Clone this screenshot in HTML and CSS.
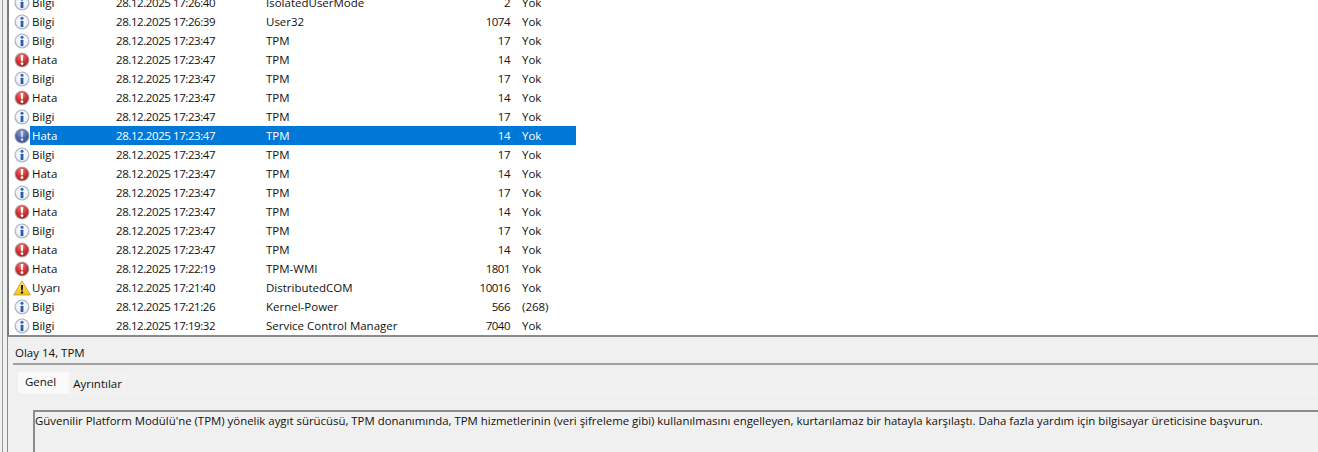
FILE: index.html
```html
<!DOCTYPE html>
<html lang="tr">
<head>
<meta charset="utf-8">
<title>Olay Görüntüleyicisi</title>
<link rel="stylesheet" href="styles.css">
</head>
<body>
<svg class="defs" width="0" height="0" aria-hidden="true">
  <defs>
    <radialGradient id="gi" cx="50%" cy="45%" r="60%"><stop offset="0" stop-color="#ffffff"/><stop offset=".7" stop-color="#eef2f8"/><stop offset="1" stop-color="#c9d0dc"/></radialGradient>
    <radialGradient id="ge" cx="45%" cy="25%" r="80%"><stop offset="0" stop-color="#ea7a7a"/><stop offset=".55" stop-color="#cc3434"/><stop offset="1" stop-color="#a51f1f"/></radialGradient>
    <radialGradient id="gs" cx="45%" cy="25%" r="80%"><stop offset="0" stop-color="#8e9cc9"/><stop offset=".55" stop-color="#5067a6"/><stop offset="1" stop-color="#37508f"/></radialGradient>
    <linearGradient id="gw" x1="0" y1="0" x2="0" y2="1"><stop offset="0" stop-color="#ffe97a"/><stop offset="1" stop-color="#f3c01c"/></linearGradient>
    <symbol id="i-info" viewBox="0 0 16 16">
      <circle cx="8" cy="8" r="7.5" fill="#aeb4bf"/>
      <circle cx="8" cy="8" r="6.4" fill="url(#gi)"/>
      <circle cx="8" cy="4.3" r="1.5" fill="#2f62b8"/>
      <rect x="6.6" y="6.7" width="2.8" height="6.4" rx=".6" fill="#2c5cae"/>
    </symbol>
    <symbol id="i-err" viewBox="0 0 16 16">
      <circle cx="8" cy="8" r="7.5" fill="#b9aeb0"/>
      <circle cx="8" cy="8" r="6.5" fill="url(#ge)"/>
      <path d="M6.7 2.9h2.6l-.5 6.4H7.2z" fill="#fff"/>
      <circle cx="8" cy="11.7" r="1.4" fill="#fff"/>
    </symbol>
    <symbol id="i-err-sel" viewBox="0 0 16 16">
      <circle cx="8" cy="8" r="7.5" fill="#8f9ab9"/>
      <circle cx="8" cy="8" r="6.5" fill="url(#gs)"/>
      <path d="M6.7 2.9h2.6l-.5 6.4H7.2z" fill="#c9d2e8"/>
      <circle cx="8" cy="11.7" r="1.4" fill="#c9d2e8"/>
    </symbol>
    <symbol id="i-warn" viewBox="0 0 18 16">
      <path d="M9 .8 17.4 15H.6z" fill="url(#gw)" stroke="#c9a227" stroke-width=".9" stroke-linejoin="round"/>
      <path d="M7.9 5h2.2l-.3 5.4H8.2z" fill="#1c1c1c"/>
      <circle cx="9" cy="12.5" r="1.2" fill="#1c1c1c"/>
    </symbol>
  </defs>
</svg>
<div class="window">
  <section class="list-pane">
    <div class="rows">
      <div class="row"><svg class="ico"><use href="#i-info"/></svg><div class="cells"><span class="c-level">Bilgi</span><span class="c-date">28.12.2025 17:26:40</span><span class="c-src">IsolatedUserMode</span><span class="c-id">2</span><span class="c-task">Yok</span></div></div>
      <div class="row"><svg class="ico"><use href="#i-info"/></svg><div class="cells"><span class="c-level">Bilgi</span><span class="c-date">28.12.2025 17:26:39</span><span class="c-src">User32</span><span class="c-id">1074</span><span class="c-task">Yok</span></div></div>
      <div class="row"><svg class="ico"><use href="#i-info"/></svg><div class="cells"><span class="c-level">Bilgi</span><span class="c-date">28.12.2025 17:23:47</span><span class="c-src">TPM</span><span class="c-id">17</span><span class="c-task">Yok</span></div></div>
      <div class="row"><svg class="ico"><use href="#i-err"/></svg><div class="cells"><span class="c-level">Hata</span><span class="c-date">28.12.2025 17:23:47</span><span class="c-src">TPM</span><span class="c-id">14</span><span class="c-task">Yok</span></div></div>
      <div class="row"><svg class="ico"><use href="#i-info"/></svg><div class="cells"><span class="c-level">Bilgi</span><span class="c-date">28.12.2025 17:23:47</span><span class="c-src">TPM</span><span class="c-id">17</span><span class="c-task">Yok</span></div></div>
      <div class="row"><svg class="ico"><use href="#i-err"/></svg><div class="cells"><span class="c-level">Hata</span><span class="c-date">28.12.2025 17:23:47</span><span class="c-src">TPM</span><span class="c-id">14</span><span class="c-task">Yok</span></div></div>
      <div class="row"><svg class="ico"><use href="#i-info"/></svg><div class="cells"><span class="c-level">Bilgi</span><span class="c-date">28.12.2025 17:23:47</span><span class="c-src">TPM</span><span class="c-id">17</span><span class="c-task">Yok</span></div></div>
      <div class="row selected"><svg class="ico"><use href="#i-err-sel"/></svg><div class="cells"><span class="c-level">Hata</span><span class="c-date">28.12.2025 17:23:47</span><span class="c-src">TPM</span><span class="c-id">14</span><span class="c-task">Yok</span></div></div>
      <div class="row"><svg class="ico"><use href="#i-info"/></svg><div class="cells"><span class="c-level">Bilgi</span><span class="c-date">28.12.2025 17:23:47</span><span class="c-src">TPM</span><span class="c-id">17</span><span class="c-task">Yok</span></div></div>
      <div class="row"><svg class="ico"><use href="#i-err"/></svg><div class="cells"><span class="c-level">Hata</span><span class="c-date">28.12.2025 17:23:47</span><span class="c-src">TPM</span><span class="c-id">14</span><span class="c-task">Yok</span></div></div>
      <div class="row"><svg class="ico"><use href="#i-info"/></svg><div class="cells"><span class="c-level">Bilgi</span><span class="c-date">28.12.2025 17:23:47</span><span class="c-src">TPM</span><span class="c-id">17</span><span class="c-task">Yok</span></div></div>
      <div class="row"><svg class="ico"><use href="#i-err"/></svg><div class="cells"><span class="c-level">Hata</span><span class="c-date">28.12.2025 17:23:47</span><span class="c-src">TPM</span><span class="c-id">14</span><span class="c-task">Yok</span></div></div>
      <div class="row"><svg class="ico"><use href="#i-info"/></svg><div class="cells"><span class="c-level">Bilgi</span><span class="c-date">28.12.2025 17:23:47</span><span class="c-src">TPM</span><span class="c-id">17</span><span class="c-task">Yok</span></div></div>
      <div class="row"><svg class="ico"><use href="#i-err"/></svg><div class="cells"><span class="c-level">Hata</span><span class="c-date">28.12.2025 17:23:47</span><span class="c-src">TPM</span><span class="c-id">14</span><span class="c-task">Yok</span></div></div>
      <div class="row"><svg class="ico"><use href="#i-err"/></svg><div class="cells"><span class="c-level">Hata</span><span class="c-date">28.12.2025 17:22:19</span><span class="c-src">TPM-WMI</span><span class="c-id">1801</span><span class="c-task">Yok</span></div></div>
      <div class="row"><svg class="ico ico-warn"><use href="#i-warn"/></svg><div class="cells"><span class="c-level">Uyarı</span><span class="c-date">28.12.2025 17:21:40</span><span class="c-src">DistributedCOM</span><span class="c-id">10016</span><span class="c-task">Yok</span></div></div>
      <div class="row"><svg class="ico"><use href="#i-info"/></svg><div class="cells"><span class="c-level">Bilgi</span><span class="c-date">28.12.2025 17:21:26</span><span class="c-src">Kernel-Power</span><span class="c-id">566</span><span class="c-task">(268)</span></div></div>
      <div class="row"><svg class="ico"><use href="#i-info"/></svg><div class="cells"><span class="c-level">Bilgi</span><span class="c-date">28.12.2025 17:19:32</span><span class="c-src">Service Control Manager</span><span class="c-id">7040</span><span class="c-task">Yok</span></div></div>
    </div>
  </section>
  <section class="detail-pane">
    <h2 class="detail-title">Olay 14, TPM</h2>
    <div class="tabs">
      <span class="tab tab-active">Genel</span>
      <span class="tab">Ayrıntılar</span>
    </div>
    <div class="tab-panel">
      <div class="message">Güvenilir Platform Modülü'ne (TPM) yönelik aygıt sürücüsü, TPM donanımında, TPM hizmetlerinin (veri şifreleme gibi) kullanılmasını engelleyen, kurtarılamaz bir hatayla karşılaştı. Daha fazla yardım için bilgisayar üreticisine başvurun.</div>
    </div>
  </section>
</div>
</body>
</html>
```
FILE: styles.css
```css
* { box-sizing: border-box; }
html, body { margin: 0; height: 100%; overflow: hidden; }
body {
  font-family: "Open Sans", "Noto Sans", "Liberation Sans", sans-serif;
  font-size: 11.5px;
  color: #111;
  background: #f0f0f0;
}
.defs { display: block; height: 0; }
.window {
  height: 452px;
  display: flex;
  flex-direction: column;
  margin-left: 2px;
  border-left: 1px solid #9a9a9a;
  padding-left: 4px;
}
.list-pane {
  height: 337px;
  flex: none;
  overflow: hidden;
  background: #fff;
  border-left: 2px solid #7a7a7a;
  border-bottom: 2px solid #8a8a8a;
}
.rows { margin-top: -7px; padding-left: 5px; }
.row { height: 19px; display: flex; align-items: center; }
.ico { width: 16px; height: 16px; flex: none; display: block; }
.ico-warn { width: 18px; margin-left: -1px; margin-right: -1px; }
.cells { display: flex; align-items: center; width: 546px; height: 19px; line-height: 18px; }
.c-level { width: 86px; padding-left: 2px; flex: none; }
.c-date { width: 150px; flex: none; letter-spacing: -.42px; }
.c-src { width: 158px; flex: none; }
.c-id { width: 86px; flex: none; text-align: right; letter-spacing: -.5px; }
.c-task { flex: none; margin-left: 12px; }
.selected .cells { background: #0078d7; color: #fff; }
.detail-pane {
  flex: 1;
  min-height: 0;
  border-left: 1px solid #8a8a8a;
  display: flex;
  flex-direction: column;
  overflow: hidden;
}
.detail-title {
  margin: 0 0 0 5px;
  height: 28px;
  line-height: 31px;
  font-size: 11.5px;
  font-weight: 400;
  padding-left: 2px;
  border-bottom: 2px solid #a0a0a0;
}
.tabs { display: flex; align-items: flex-end; height: 28px; padding-left: 10px; flex: none; }
.tab {
  height: 19px;
  padding: 0 2px;
  line-height: 18px;
  border: 1px solid #f5f5f5;
  border-bottom: 0;
  background: #f0f0f0;
}
.tab-active {
  height: 21px;
  padding: 0 12px 0 6px;
  margin-right: 1px;
  background: #fafafa;
  border-color: #f8f8f8;
}
.tab-panel {
  flex: 1;
  margin-left: 13px;
  border-top: 1px solid #f6f6f6;
  padding: 16px 0 0 12px;
}
.message {
  height: 60px;
  border-top: 2px solid #8c8c8c;
  border-left: 2px solid #8c8c8c;
  padding: 0;
  font-size: 11.41px;
  line-height: 18px;
  white-space: nowrap;
}
```
